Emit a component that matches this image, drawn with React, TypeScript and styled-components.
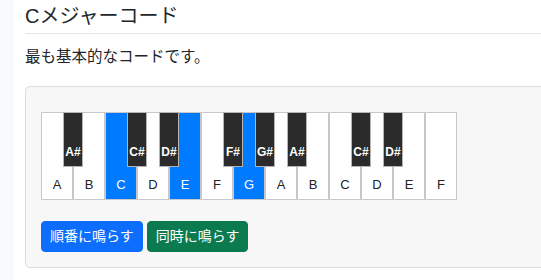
import styled, { createGlobalStyle } from "styled-components";

const GlobalStyle = createGlobalStyle`
  html, body {
    margin: 0;
    padding: 0;
    background: #ffffff;
    overflow: hidden;
  }
  body {
    font-family: "Liberation Sans", "Noto Sans CJK JP", sans-serif;
    color: #212529;
  }
`;

type WhiteKeyData = { note: string; active?: boolean };

const whiteKeys: WhiteKeyData[] = [
  { note: "A" },
  { note: "B" },
  { note: "C", active: true },
  { note: "D" },
  { note: "E", active: true },
  { note: "F" },
  { note: "G", active: true },
  { note: "A" },
  { note: "B" },
  { note: "C" },
  { note: "D" },
  { note: "E" },
  { note: "F" },
];

// black key sits on the boundary after the white key at this index
const blackKeys = [
  { note: "A#", after: 0 },
  { note: "C#", after: 2 },
  { note: "D#", after: 3 },
  { note: "F#", after: 5 },
  { note: "G#", after: 6 },
  { note: "A#", after: 7 },
  { note: "C#", after: 9 },
  { note: "D#", after: 10 },
];

const KEY_W = 32;
const BLACK_W = 20;

const App = () => {
  return (
    <>
      <GlobalStyle />
      <Layout>
        <Sidebar />
        <Main>
          <Title>Cメジャーコード</Title>
          <Description>最も基本的なコードです。</Description>
          <Card>
            <Keyboard>
              {whiteKeys.map((k, i) => (
                <WhiteKey key={i} $active={k.active}>
                  <WhiteLabel $active={k.active}>{k.note}</WhiteLabel>
                </WhiteKey>
              ))}
              {blackKeys.map((k, i) => (
                <BlackKey
                  key={i}
                  style={{ left: (k.after + 1) * KEY_W - BLACK_W / 2 }}
                >
                  <BlackLabel>{k.note}</BlackLabel>
                </BlackKey>
              ))}
            </Keyboard>
            <Buttons>
              <Button $variant="primary">順番に鳴らす</Button>
              <Button $variant="success">同時に鳴らす</Button>
            </Buttons>
          </Card>
        </Main>
      </Layout>
    </>
  );
};

const Layout = styled.div`
  display: flex;
  width: 100%;
  height: 100vh;
  overflow: hidden;
`;

const Sidebar = styled.div`
  width: 14px;
  flex-shrink: 0;
  background-color: #f8f9fa;
`;

const Main = styled.div`
  width: 560px;
  flex-shrink: 0;
  padding-left: 11px;
`;

const Title = styled.h4`
  margin: 4px 0 0;
  padding-bottom: 5px;
  font-size: 20px;
  line-height: 24px;
  font-weight: 400;
  border-bottom: 1px solid #e5e5e5;
`;

const Description = styled.p`
  margin: 12px 0 0;
  font-size: 15.5px;
  line-height: 22px;
`;

const Card = styled.div`
  margin-top: 18px;
  padding: 25px 15px 15px;
  background-color: #f7f7f7;
  border: 1px solid #dcdcdc;
  border-radius: 5px;
`;

const Keyboard = styled.div`
  position: relative;
  display: flex;
  width: max-content;
`;

const WhiteKey = styled.div<{ $active?: boolean }>`
  box-sizing: border-box;
  width: ${KEY_W}px;
  height: 88px;
  border: 1px solid #c8c8c8;
  background-color: ${(p) => (p.$active ? "#007bff" : "#ffffff")};
  display: flex;
  align-items: flex-end;
  justify-content: center;
  padding-bottom: 7px;
`;

const WhiteLabel = styled.span<{ $active?: boolean }>`
  font-size: 13px;
  color: ${(p) => (p.$active ? "#ffffff" : "#222222")};
`;

const BlackKey = styled.div`
  position: absolute;
  top: 0;
  box-sizing: border-box;
  width: ${BLACK_W}px;
  height: 55px;
  background-color: #2b2b2b;
  border: 1px solid #b5b5b5;
  display: flex;
  align-items: flex-end;
  justify-content: center;
  padding-bottom: 7px;
  z-index: 1;
`;

const BlackLabel = styled.span`
  font-size: 12px;
  font-weight: 700;
  color: #ffffff;
`;

const Buttons = styled.div`
  display: flex;
  gap: 4px;
  margin-top: 21px;
`;

const Button = styled.button<{ $variant: "primary" | "success" }>`
  font-family: "Liberation Sans", "Noto Sans CJK JP", sans-serif;
  font-size: 14px;
  line-height: 21px;
  padding: 4px 8px;
  border-radius: 4px;
  color: #ffffff;
  border: 1px solid
    ${(p) => (p.$variant === "primary" ? "#0d6efd" : "#0b7a4f")};
  background-color: ${(p) =>
    p.$variant === "primary" ? "#0d6efd" : "#0b7a4f"};
  cursor: pointer;
`;

export default App;
